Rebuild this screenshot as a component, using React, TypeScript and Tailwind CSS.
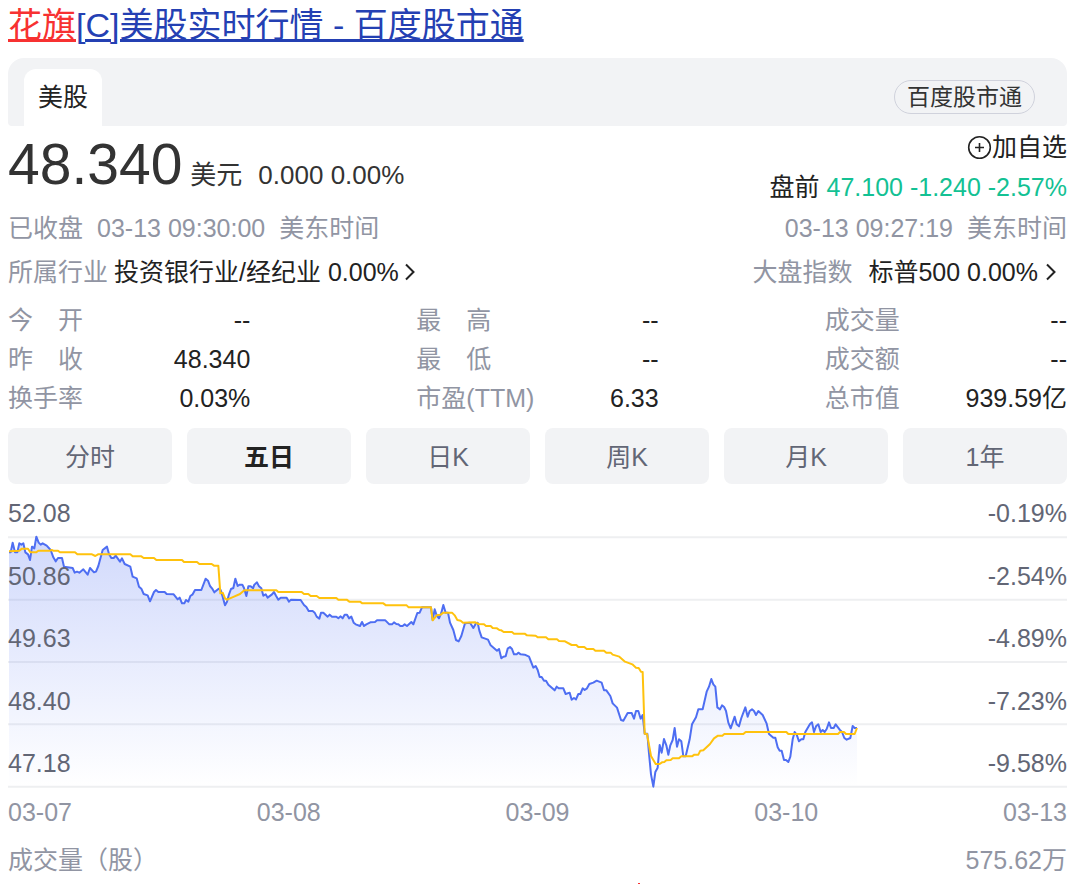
import { useState } from "react";

const RANGES = ["分时", "五日", "日K", "周K", "月K", "1年"];

const STATS = [
  [
    { label: "今　开", value: "--" },
    { label: "昨　收", value: "48.340" },
    { label: "换手率", value: "0.03%" },
  ],
  [
    { label: "最　高", value: "--" },
    { label: "最　低", value: "--" },
    { label: "市盈(TTM)", value: "6.33" },
  ],
  [
    { label: "成交量", value: "--" },
    { label: "成交额", value: "--" },
    { label: "总市值", value: "939.59亿" },
  ],
];

const PRICE_TICKS = ["52.08", "50.86", "49.63", "48.40", "47.18"];
const PERCENT_TICKS = ["-0.19%", "-2.54%", "-4.89%", "-7.23%", "-9.58%"];
const DATES = ["03-07", "03-08", "03-09", "03-10", "03-13"];
const GRID_LINES = [112, 299, 486, 673, 860];

const PRICE_LINE =
  "3,157 8,157 14,128 21,157 28,157 34,130 40,134 46,130 52,157 60,163 66,180 72,140 79,145 85,110 92,128 98,134 104,130 116,137 128,150 136,172 143,184 150,174 162,174 168,200 194,204 200,218 207,215 214,218 226,208 239,224 246,204 258,217 264,215 271,198 284,150 297,140 303,162 310,174 317,174 323,167 336,185 342,175 350,192 367,200 374,230 386,235 393,260 400,266 407,282 419,286 426,304 438,276 444,270 451,276 470,276 476,282 497,283 509,298 515,293 522,310 529,310 534,300 541,305 547,288 554,283 561,270 580,270 " +
  "593,236 600,242 606,258 612,265 619,277 632,266 638,270 644,290 651,316 657,305 663,283 669,267 676,264 682,236 689,258 695,254 703,254 708,264 715,288 721,259 728,259 735,265 739,254 747,247 753,259 760,265 766,287 773,283 779,293 792,283 798,276 804,287 811,299 818,293 836,293 843,305 849,299 878,300 888,315 895,321 902,333 914,333 920,338 926,350 934,356 939,338 946,338 959,350 965,344 972,350 985,350 991,355 998,349 1004,355 1010,344 1017,344 1023,355 1030,350 1037,368 1043,373 1056,378 1062,366 1068,378 1075,373 1087,367 1101,366 1107,361 1132,361 1144,373 1152,373 1158,367 1165,372 1171,373 1177,378 1184,378 1190,373 1197,378 1210,366 1216,373 " +
  "1228,339 1235,338 1242,322 1269,322 1274,360 1280,328 1286,346 1293,355 1300,338 1306,315 1313,338 1320,338 1326,368 1336,390 1344,420 1352,424 1360,408 1371,370 1386,368 1396,384 1404,370 1409,368 1414,392 1421,412 1440,419 1448,436 1467,452 1473,447 1480,475 1486,470 1493,469 1499,446 1506,441 1512,447 1518,463 1526,463 1531,458 1538,463 1550,464 1563,470 1576,503 1583,498 1589,510 1595,531 1601,531 1608,542 1614,542 1621,554 1640,571 1646,560 1652,565 1666,565 1673,582 1685,578 1691,599 1698,594 1704,598 1711,582 1717,582 1724,565 1730,570 1737,565 1744,552 1756,548 1766,542 1781,548 1788,571 1795,571 1807,588 1814,610 1827,623 " +
  "1839,660 1846,662 1859,639 1871,639 1878,656 1884,633 1891,633 1898,656 1904,645 1910,701 1918,701 1923,760 1929,823 1936,860 1942,816 1949,803 1955,735 1961,758 1968,717 1975,736 1981,764 1987,736 1994,720 2000,684 2007,740 2013,718 2020,724 2026,769 2033,769 2045,718 2052,673 2064,652 2071,628 2084,628 2096,575 2103,560 2110,537 2116,553 2122,560 2128,622 2136,628 2142,616 2149,622 2154,633 2161,668 2168,685 2174,668 2180,650 2186,673 2193,679 2200,654 2212,622 2219,650 2225,633 2232,628 2238,633 2244,645 2251,633 2264,645 2276,671 2283,702 2296,713 2302,713 2309,742 2315,752 2321,752 2328,780 2334,780 2341,786 2347,770 2354,718 2360,696 2366,704 2373,724 2380,718 2386,718 2392,696 2406,672 2412,667 2418,696 2424,679 2431,673 2438,696 2444,690 2450,696 2456,687 2463,667 2469,684 2477,684 2483,673 2495,689 2502,696 2509,714 2516,719 2527,714 2534,678 2540,684 2547,684";

const AVERAGE_LINE =
  "3,154 34,152 42,146 60,146 67,157 85,157 91,152 126,152 131,150 136,152 150,152 156,157 201,157 208,163 252,163 262,168 270,163 367,163 374,169 400,169 407,174 438,174 445,180 522,180 528,186 567,186 574,192 611,192 618,197 631,197 637,280 644,278 651,295 657,299 673,292 696,282 709,271 805,271 811,276 881,276 888,282 901,282 908,288 926,288 934,294 985,294 991,299 1016,299 1024,305 1056,305 1063,310 1126,310 1134,316 1196,316 1202,322 " +
  "1269,322 1274,361 1286,346 1298,344 1306,338 1332,338 1340,346 1348,360 1358,362 1365,368 1402,367 1412,372 1428,373 1434,378 1448,378 1454,384 1467,385 1474,390 1480,391 1487,396 1512,396 1518,401 1550,401 1557,406 1583,407 1589,412 1614,412 1621,418 1647,418 1653,423 1671,424 1691,435 1705,435 1711,441 1729,441 1736,447 1756,447 1762,452 1788,452 1795,458 1808,458 1814,464 1834,470 1851,485 1873,493 1884,503 1892,504 1899,515 1904,516 " +
  "1910,701 1917,702 1929,768 1943,792 1955,792 1962,787 1969,786 1975,781 1988,780 1994,775 2013,775 2020,769 2052,769 2059,764 2071,764 2077,752 2086,751 2106,732 2118,715 2130,707 2143,707 2149,702 2206,702 2213,696 2335,696 2341,702 2490,702 2496,696 2508,696 2514,702 2540,702 2547,684";

function Chevron() {
  return (
    <svg width="10" height="18" viewBox="0 0 10 18" fill="none" stroke="#222" strokeWidth="2" aria-hidden="true">
      <path d="M1 1.5L8.5 9L1 16.5" />
    </svg>
  );
}

function Ticks({ items, right }: { items: string[]; right?: boolean }) {
  return (
    <ul className={`flex h-[276px] flex-col justify-between leading-[26px] text-[#626675] ${right ? "text-right" : ""}`}>
      {items.map((t) => (
        <li key={t}>{t}</li>
      ))}
    </ul>
  );
}

function PriceChart() {
  return (
    <div className="relative mt-4 h-[290px]">
      <svg
        className="absolute inset-0 h-full w-full"
        viewBox="0 0 3177 870"
        preserveAspectRatio="none"
        fill="none"
        role="img"
        aria-label="五日走势"
      >
        <defs>
          <linearGradient id="area" x1="0" y1="110" x2="0" y2="860" gradientUnits="userSpaceOnUse">
            <stop offset="0" stopColor="#4e6ef2" stopOpacity="0.26" />
            <stop offset="1" stopColor="#4e6ef2" stopOpacity="0" />
          </linearGradient>
        </defs>
        {GRID_LINES.map((y) => (
          <line key={y} x1="0" x2="3177" y1={y} y2={y} stroke="#eeeff1" strokeWidth="2" vectorEffect="non-scaling-stroke" />
        ))}
        <polygon points={`3,860 ${PRICE_LINE} 2547,860`} fill="url(#area)" />
        <polyline points={PRICE_LINE} stroke="#4e6ef2" strokeWidth="2" strokeLinejoin="round" vectorEffect="non-scaling-stroke" />
        <polyline points={AVERAGE_LINE} stroke="#ffc20d" strokeWidth="2" strokeLinejoin="round" vectorEffect="non-scaling-stroke" />
      </svg>
      <div className="relative flex justify-between">
        <Ticks items={PRICE_TICKS} />
        <Ticks items={PERCENT_TICKS} right />
      </div>
    </div>
  );
}

export default function App() {
  const [range, setRange] = useState("五日");

  return (
    <main className="bg-white pr-[13px] pl-2 font-['Liberation_Sans','Noto_Sans_CJK_SC',sans-serif] text-[25px] whitespace-nowrap text-[#222]">
      <h1 className="mb-2 text-[34px] leading-[50px]">
        <a href="#" className="text-[#2440b3] underline">
          <em className="text-[#f73131] not-italic underline">花旗</em>[C]美股实时行情 - 百度股市通
        </a>
      </h1>

      {/* Market tabs */}
      <div className="flex h-[68px] items-end justify-between rounded-t-2xl rounded-b bg-[#f2f3f5] pr-8 pl-4">
        <button type="button" className="h-[57px] rounded-t-xl bg-white px-[14px]">
          美股
        </button>
        <a
          href="#"
          className="mb-3 rounded-full border border-[#d0d2dc] px-3 text-[23px] leading-[32px] text-[#333]"
        >
          百度股市通
        </a>
      </div>

      {/* Quote */}
      <div className="flex justify-between">
        <div className="flex h-[82px] items-baseline text-[26px] text-[#333]">
          <span className="text-[57px] leading-[76px]">48.340</span>
          <span className="ml-2">美元</span>
          <span className="ml-4">0.000 0.00%</span>
        </div>
        <div className="flex flex-col items-end leading-[40px]">
          <button type="button" className="mt-px flex items-center">
            <svg width="25" height="25" viewBox="0 0 25 25" fill="none" stroke="#222" strokeWidth="1.6" aria-hidden="true">
              <circle cx="12.5" cy="12.5" r="10.8" />
              <path d="M12.5 8v9M8 12.5h9" />
            </svg>
            加自选
          </button>
          <p>
            盘前 <span className="text-[#13c193]">47.100 -1.240 -2.57%</span>
          </p>
        </div>
      </div>
      <div className="flex justify-between leading-[40px] text-[#9195a3]">
        <p className="flex gap-[14px]">
          <span>已收盘</span>
          <span>03-13 09:30:00</span>
          <span>美东时间</span>
        </p>
        <p className="flex gap-[14px]">
          <span>03-13 09:27:19</span>
          <span>美东时间</span>
        </p>
      </div>
      <div className="flex justify-between leading-[48px]">
        <a href="#" className="flex items-center gap-[6px]">
          <span className="text-[#9195a3]">所属行业</span>
          投资银行业/经纪业 0.00%
          <Chevron />
        </a>
        <a href="#" className="mr-[11px] flex items-center gap-2">
          <span className="mr-2 text-[#9195a3]">大盘指数</span>
          标普500 0.00%
          <Chevron />
        </a>
      </div>

      {/* Key figures */}
      <div className="mt-[5px] grid grid-cols-3 gap-[166px] leading-[39px]">
        {STATS.map((column, i) => (
          <dl key={i}>
            {column.map((s) => (
              <div key={s.label} className="flex justify-between">
                <dt className="text-[#9195a3]">{s.label}</dt>
                <dd>{s.value}</dd>
              </div>
            ))}
          </dl>
        ))}
      </div>

      {/* Range switch */}
      <div className="mt-[10px] grid grid-cols-6 gap-[15px]">
        {RANGES.map((r) => (
          <button
            key={r}
            type="button"
            onClick={() => setRange(r)}
            className={`h-14 rounded-lg bg-[#f2f3f5] pt-1 ${r === range ? "font-bold text-[#222]" : "text-[#626675]"}`}
          >
            {r}
          </button>
        ))}
      </div>

      <PriceChart />

      <ul className="flex justify-between leading-[44px] text-[#9195a3]">
        {DATES.map((d) => (
          <li key={d}>{d}</li>
        ))}
      </ul>

      {/* Volume */}
      <div className="flex h-[49px] items-center justify-between pt-[5px] text-[#9195a3]">
        <span>成交量（股）</span>
        <span>575.62万</span>
      </div>
      <svg className="block h-px w-full" viewBox="0 0 1059 1" preserveAspectRatio="none" aria-hidden="true">
        <rect x="630" width="2" height="1" fill="#f73131" />
      </svg>
    </main>
  );
}
